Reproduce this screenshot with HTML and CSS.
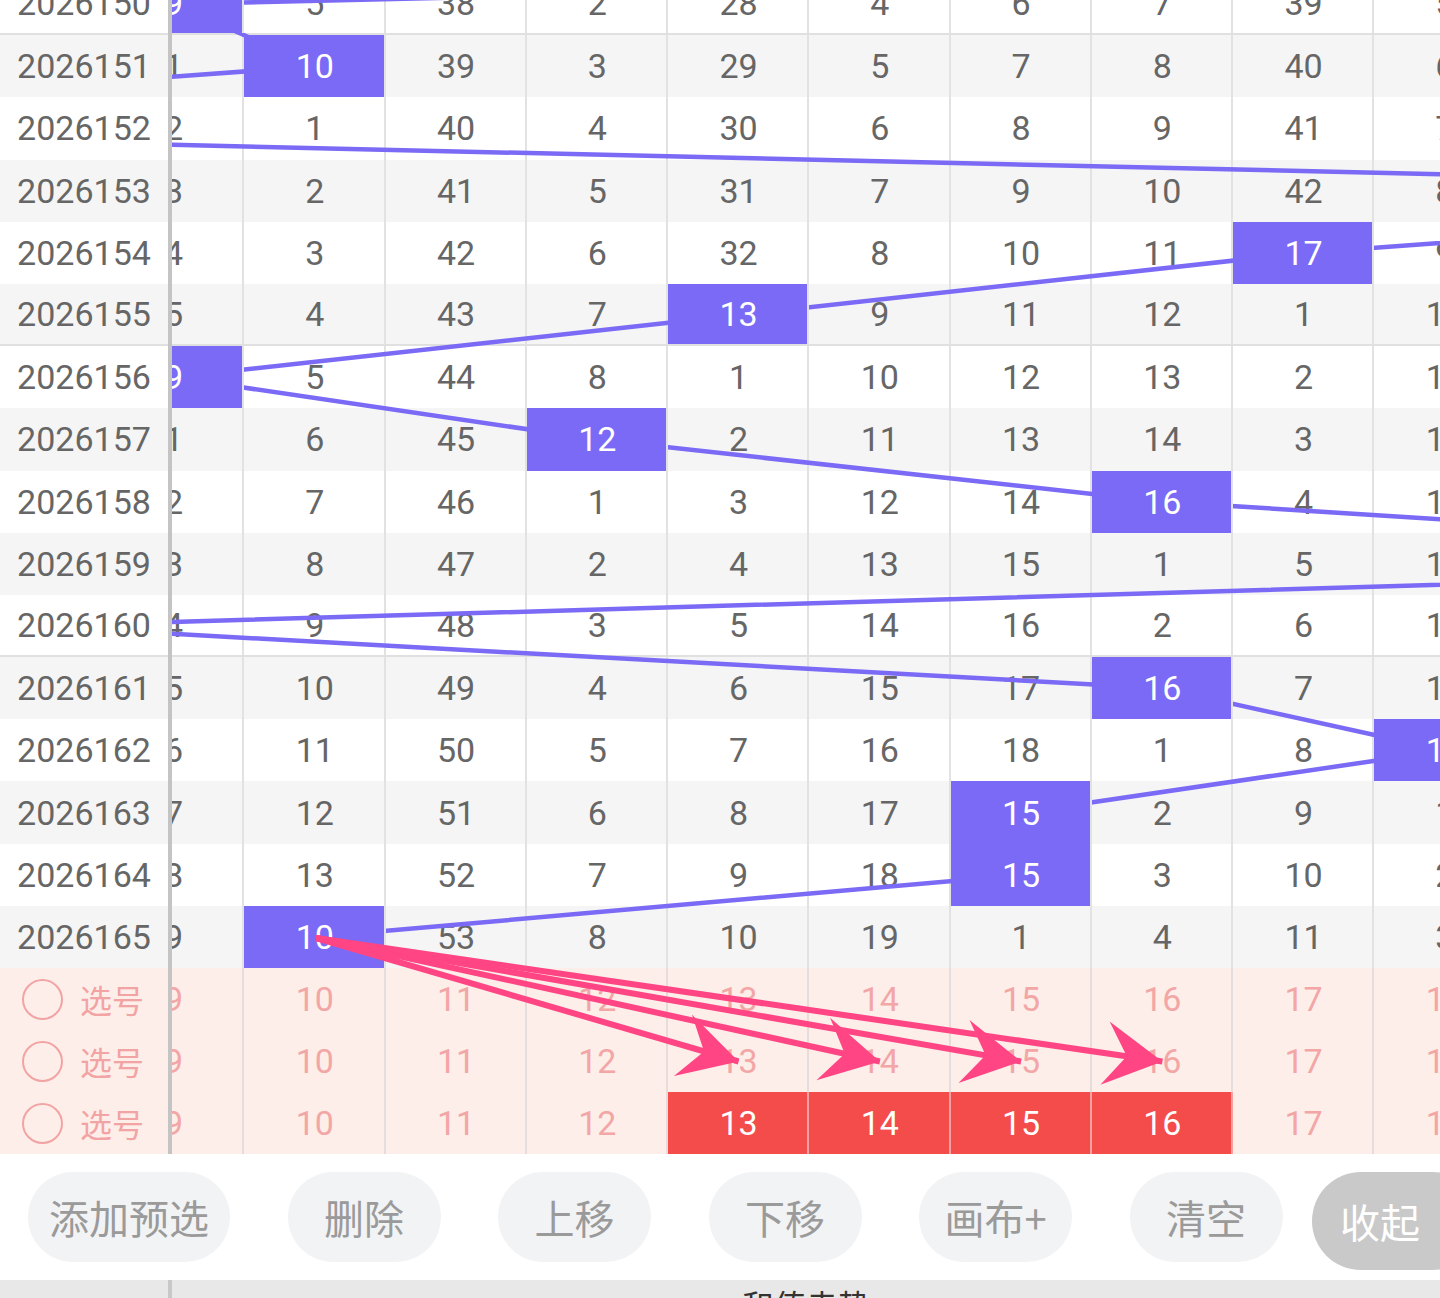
FILE: index.html
```html
<!DOCTYPE html>
<html lang="zh-CN">
<head>
<meta charset="utf-8">
<title>走势图</title>
<link rel="stylesheet" href="styles.css">
</head>
<body>
<div class="chart">
  <div class="chart-body">
    <div class="fixed-col">
      <div class="issue sep">2026150</div>
      <div class="issue odd">2026151</div>
      <div class="issue">2026152</div>
      <div class="issue odd">2026153</div>
      <div class="issue">2026154</div>
      <div class="issue odd sep">2026155</div>
      <div class="issue">2026156</div>
      <div class="issue odd">2026157</div>
      <div class="issue">2026158</div>
      <div class="issue odd">2026159</div>
      <div class="issue sep">2026160</div>
      <div class="issue odd">2026161</div>
      <div class="issue">2026162</div>
      <div class="issue odd">2026163</div>
      <div class="issue">2026164</div>
      <div class="issue odd">2026165</div>
      <div class="issue pick"><span class="ring"></span><span>选号</span></div>
      <div class="issue pick"><span class="ring"></span><span>选号</span></div>
      <div class="issue pick"><span class="ring"></span><span>选号</span></div>
    </div>
    <div class="viewport">
      <div class="track">
        <div class="row sep"><div class="cell hit">9</div><div class="cell">5</div><div class="cell">38</div><div class="cell">2</div><div class="cell">28</div><div class="cell">4</div><div class="cell">6</div><div class="cell">7</div><div class="cell">39</div><div class="cell">5</div></div>
        <div class="row odd"><div class="cell">1</div><div class="cell hit">10</div><div class="cell">39</div><div class="cell">3</div><div class="cell">29</div><div class="cell">5</div><div class="cell">7</div><div class="cell">8</div><div class="cell">40</div><div class="cell">6</div></div>
        <div class="row"><div class="cell">2</div><div class="cell">1</div><div class="cell">40</div><div class="cell">4</div><div class="cell">30</div><div class="cell">6</div><div class="cell">8</div><div class="cell">9</div><div class="cell">41</div><div class="cell">7</div></div>
        <div class="row odd"><div class="cell">3</div><div class="cell">2</div><div class="cell">41</div><div class="cell">5</div><div class="cell">31</div><div class="cell">7</div><div class="cell">9</div><div class="cell">10</div><div class="cell">42</div><div class="cell">8</div></div>
        <div class="row"><div class="cell">4</div><div class="cell">3</div><div class="cell">42</div><div class="cell">6</div><div class="cell">32</div><div class="cell">8</div><div class="cell">10</div><div class="cell">11</div><div class="cell hit">17</div><div class="cell">9</div></div>
        <div class="row odd sep"><div class="cell">5</div><div class="cell">4</div><div class="cell">43</div><div class="cell">7</div><div class="cell hit">13</div><div class="cell">9</div><div class="cell">11</div><div class="cell">12</div><div class="cell">1</div><div class="cell">10</div></div>
        <div class="row"><div class="cell hit">9</div><div class="cell">5</div><div class="cell">44</div><div class="cell">8</div><div class="cell">1</div><div class="cell">10</div><div class="cell">12</div><div class="cell">13</div><div class="cell">2</div><div class="cell">11</div></div>
        <div class="row odd"><div class="cell">1</div><div class="cell">6</div><div class="cell">45</div><div class="cell hit">12</div><div class="cell">2</div><div class="cell">11</div><div class="cell">13</div><div class="cell">14</div><div class="cell">3</div><div class="cell">12</div></div>
        <div class="row"><div class="cell">2</div><div class="cell">7</div><div class="cell">46</div><div class="cell">1</div><div class="cell">3</div><div class="cell">12</div><div class="cell">14</div><div class="cell hit">16</div><div class="cell">4</div><div class="cell">13</div></div>
        <div class="row odd"><div class="cell">3</div><div class="cell">8</div><div class="cell">47</div><div class="cell">2</div><div class="cell">4</div><div class="cell">13</div><div class="cell">15</div><div class="cell">1</div><div class="cell">5</div><div class="cell">14</div></div>
        <div class="row sep"><div class="cell">4</div><div class="cell">9</div><div class="cell">48</div><div class="cell">3</div><div class="cell">5</div><div class="cell">14</div><div class="cell">16</div><div class="cell">2</div><div class="cell">6</div><div class="cell">15</div></div>
        <div class="row odd"><div class="cell">5</div><div class="cell">10</div><div class="cell">49</div><div class="cell">4</div><div class="cell">6</div><div class="cell">15</div><div class="cell">17</div><div class="cell hit">16</div><div class="cell">7</div><div class="cell">16</div></div>
        <div class="row"><div class="cell">6</div><div class="cell">11</div><div class="cell">50</div><div class="cell">5</div><div class="cell">7</div><div class="cell">16</div><div class="cell">18</div><div class="cell">1</div><div class="cell">8</div><div class="cell hit">18</div></div>
        <div class="row odd"><div class="cell">7</div><div class="cell">12</div><div class="cell">51</div><div class="cell">6</div><div class="cell">8</div><div class="cell">17</div><div class="cell hit">15</div><div class="cell">2</div><div class="cell">9</div><div class="cell">1</div></div>
        <div class="row"><div class="cell">8</div><div class="cell">13</div><div class="cell">52</div><div class="cell">7</div><div class="cell">9</div><div class="cell">18</div><div class="cell hit">15</div><div class="cell">3</div><div class="cell">10</div><div class="cell">2</div></div>
        <div class="row odd"><div class="cell">9</div><div class="cell hit">10</div><div class="cell">53</div><div class="cell">8</div><div class="cell">10</div><div class="cell">19</div><div class="cell">1</div><div class="cell">4</div><div class="cell">11</div><div class="cell">3</div></div>
        <div class="row pick"><div class="cell">9</div><div class="cell">10</div><div class="cell">11</div><div class="cell">12</div><div class="cell">13</div><div class="cell">14</div><div class="cell">15</div><div class="cell">16</div><div class="cell">17</div><div class="cell">18</div></div>
        <div class="row pick"><div class="cell">9</div><div class="cell">10</div><div class="cell">11</div><div class="cell">12</div><div class="cell">13</div><div class="cell">14</div><div class="cell">15</div><div class="cell">16</div><div class="cell">17</div><div class="cell">18</div></div>
        <div class="row pick"><div class="cell">9</div><div class="cell">10</div><div class="cell">11</div><div class="cell">12</div><div class="cell red">13</div><div class="cell red">14</div><div class="cell red">15</div><div class="cell red">16</div><div class="cell">17</div><div class="cell">18</div></div>

        <svg class="trend" width="1413" height="1182" viewBox="0 0 1413 1182" aria-hidden="true">
          <polyline points="2754.4,-31.1 70.6,31.1 211.9,93.3 -635.6,155.5 2048.1,217.7 1200.6,279.9 635.6,342.1 70.6,404.3 494.4,466.5 1059.4,528.7 2048.1,590.9 -70.6,653.1 1059.4,715.3 1341.9,777.5 918.1,839.7 918.1,901.9 211.9,964.1" />
        </svg>
        <svg class="arrows" width="1413" height="1182" viewBox="0 0 1413 1182" aria-hidden="true">
          <defs>
            <marker id="head" viewBox="-60 -36 62 72" refX="0" refY="0" markerWidth="62" markerHeight="72" markerUnits="userSpaceOnUse" orient="auto">
              <path d="M0,0 L-58,-32 L-36,0 L-58,32 Z" />
            </marker>
          </defs>
          <line x1="213" y1="965" x2="635.6" y2="1088.5" marker-end="url(#head)" />
          <line x1="213" y1="965" x2="776.9" y2="1088.5" marker-end="url(#head)" />
          <line x1="213" y1="965" x2="918.1" y2="1088.5" marker-end="url(#head)" />
          <line x1="213" y1="965" x2="1059.4" y2="1088.5" marker-end="url(#head)" />
        </svg>
      </div>
    </div>
  </div>
</div>

<div class="actions">
  <div class="btn">添加预选</div>
  <div class="btn">删除</div>
  <div class="btn">上移</div>
  <div class="btn">下移</div>
  <div class="btn">画布+</div>
  <div class="btn">清空</div>
  <div class="btn btn-fold">收起</div>
</div>

<div class="footer">
  <div class="footer-left"></div>
  <div class="footer-title">和值走势</div>
</div>
</body>
</html>
```

FILE: styles.css
```css
* {
  box-sizing: border-box;
}

html,
body {
  margin: 0;
  padding: 0;
}

body {
  width: 1440px;
  height: 1298px;
  overflow: hidden;
  background: #ffffff;
  font-family: Roboto, "Noto Sans CJK SC", sans-serif;
}

.chart {
  height: 1154px;
  overflow: hidden;
}

.chart-body {
  display: flex;
  margin-top: -27px;
}

.fixed-col {
  flex: none;
  width: 172px;
  border-right: 4px solid #c4c4c4;
  background: #ffffff;
  position: relative;
  z-index: 5;
}

.issue {
  height: 62.2px;
  display: flex;
  align-items: center;
  justify-content: center;
  font-size: 34px;
  color: #666666;
  background: #ffffff;
}

.issue.odd {
  background: #f5f5f5;
}

.sep {
  border-bottom: 2px solid #e0e0e0;
}

.issue.pick {
  background: #fdeee9;
  justify-content: flex-start;
  padding-left: 22px;
  gap: 17px;
  font-family: "Noto Sans CJK SC", sans-serif;
  font-size: 32px;
  color: #f2a3a3;
}

.ring {
  width: 41px;
  height: 41px;
  border: 2px solid #f2a3a3;
  border-radius: 50%;
  flex: none;
}

.viewport {
  flex: 1;
  min-width: 0;
  overflow: hidden;
}

.track {
  position: relative;
  margin-left: -69px;
  width: 1413px;
}

.row {
  display: flex;
  height: 62.2px;
  background: #ffffff;
}

.row.odd {
  background: #f5f5f5;
}

.row.pick {
  background: #fdeee9;
}

.cell {
  flex: none;
  width: 141.25px;
  padding-left: 2px;
  border-right: 2px solid #e2e2e2;
  background-clip: padding-box;
  display: flex;
  align-items: center;
  justify-content: center;
  font-size: 34px;
  color: #666666;
}

.pick .cell {
  color: #f3a6a6;
  border-right-color: #e6dcdc;
}

.cell.hit {
  background-color: #7a6af5;
  color: #ffffff;
  position: relative;
  z-index: 2;
}

.pick .cell.red {
  background-color: #f44b4b;
  color: #ffffff;
  border-right-color: #f7a0a0;
}

.trend,
.arrows {
  position: absolute;
  left: 0;
  top: 0;
  overflow: visible;
  pointer-events: none;
}

.trend {
  z-index: 1;
}

.trend polyline {
  fill: none;
  stroke: #7a6af5;
  stroke-width: 4.5;
  stroke-linejoin: round;
}

.arrows {
  z-index: 3;
}

.arrows line {
  stroke: #ff4583;
  stroke-width: 6;
}

.arrows path {
  fill: #ff4583;
}

.actions {
  height: 126px;
  display: flex;
  align-items: flex-start;
  gap: 57.5px;
  padding: 18px 0 0 28px;
  overflow: hidden;
  background: #ffffff;
}

.btn {
  flex: none;
  height: 90px;
  min-width: 153px;
  padding: 0 21px;
  border-radius: 45px;
  background: #f2f3f5;
  color: #9a9a9a;
  font-family: "Noto Sans CJK SC", sans-serif;
  font-size: 40px;
  display: flex;
  align-items: center;
  justify-content: center;
}

.btn-fold {
  height: 98px;
  width: 170px;
  margin-left: -28px;
  padding: 0 0 0 28px;
  justify-content: flex-start;
  border-radius: 49px;
  background: #c9c9c9;
  color: #ffffff;
}

.footer {
  display: flex;
  height: 60px;
  background: #e8e8e8;
}

.footer-left {
  flex: none;
  width: 172px;
  border-right: 4px solid #c8c8c8;
}

.footer-title {
  flex: 1;
  text-align: center;
  font-family: "Noto Sans CJK SC", sans-serif;
  font-size: 32px;
  line-height: 1;
  padding-top: 8px;
  color: #333333;
}
```
